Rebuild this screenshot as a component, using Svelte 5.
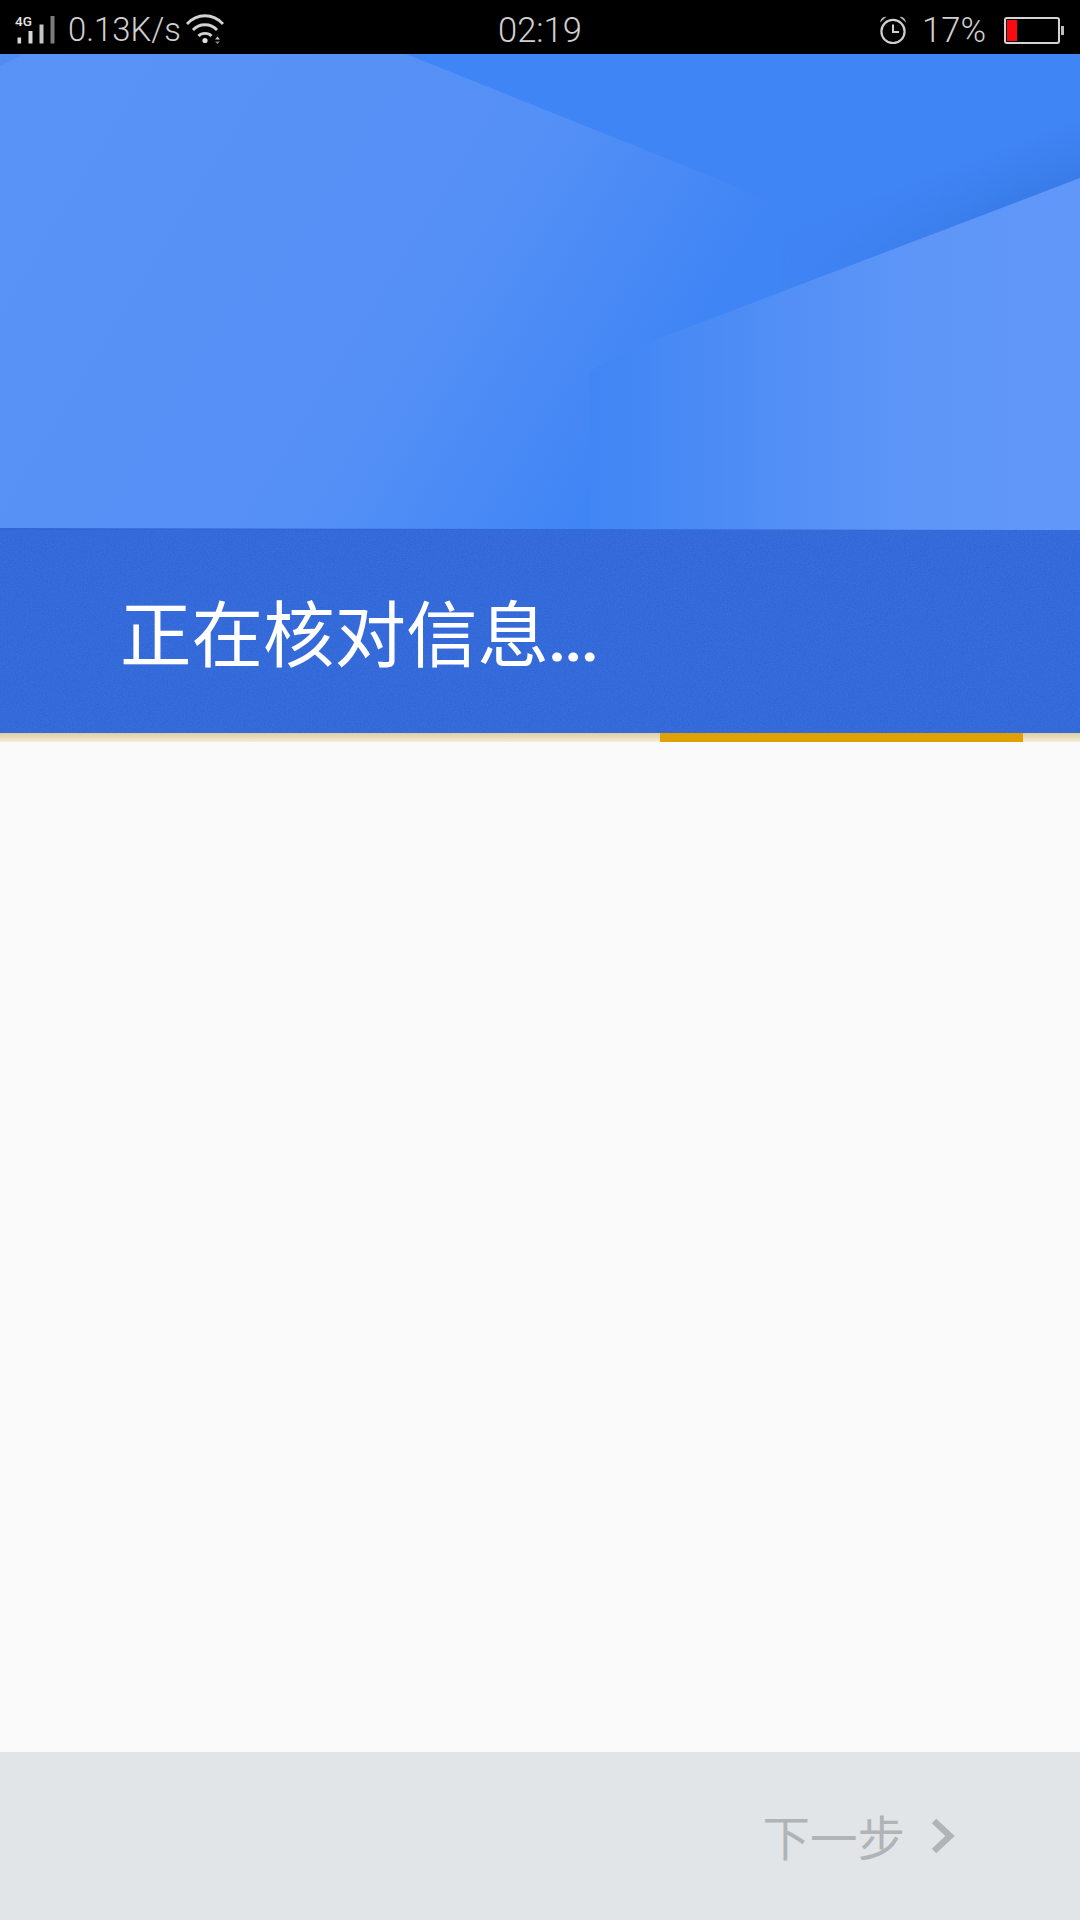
<script>
  const title = '正在核对信息';
</script>

<div class="screen">
  <header class="status">
    <div class="left">
      <svg class="signal" width="46" height="36" viewBox="0 -6 46 36">
        <text x="0" y="10" class="net">4G</text>
        <rect x="2.5" y="21.5" width="3.6" height="6" fill="#d6d6d6"/>
        <rect x="13.5" y="15" width="4" height="12.5" fill="#d6d6d6"/>
        <rect x="24.5" y="8.5" width="4" height="19" fill="#c4c4c4"/>
        <rect x="35.5" y="0" width="4" height="27.5" fill="#7c7c7c"/>
      </svg>
      <span class="speed">0.13K/s</span>
      <svg class="wifi" width="38" height="30" viewBox="0 0 38 30" fill="none" stroke="#d2d2d2" stroke-width="2.8">
        <path d="M1 10 C11 -1 27 -1 37 10"/>
        <path d="M7 16 C13 9 25 9 31 16"/>
        <path d="M12.5 22 C15.5 18.5 22.5 18.5 25.5 22"/>
        <circle cx="19" cy="26.5" r="2.6" fill="#e0e0e0" stroke="none"/>
        <path d="M29 25.5 L34 25.5 L31.5 22.5 Z" fill="#c8c8c8" stroke="none"/>
        <path d="M29 27.5 L34 27.5 L31.5 30 Z" fill="#8a8a8a" stroke="none"/>
      </svg>
    </div>
    <div class="time">02:19</div>
    <div class="right">
      <svg class="alarm" width="28" height="28" viewBox="0 0 28 28" fill="none" stroke="#cfcfcf">
        <circle cx="14" cy="15.5" r="11.6" stroke-width="2.2"/>
        <path d="M14 8.5 V16 H20" stroke-width="2"/>
        <path d="M1 6.5 C1.5 2.5 4 0.6 7.5 0.8 Z" fill="#b8b8b8" stroke="none"/>
        <path d="M27 6.5 C26.5 2.5 24 0.6 20.5 0.8 Z" fill="#b8b8b8" stroke="none"/>
      </svg>
      <span class="pct">17%</span>
      <div class="battery">
        <div class="charge"></div>
      </div>
      <div class="tip"></div>
    </div>
  </header>

  <section class="hero">
    <svg class="art" viewBox="0 0 1080 476" preserveAspectRatio="none">
      <defs>
        <linearGradient id="left" gradientUnits="userSpaceOnUse" x1="0" y1="0" x2="853" y2="521">
          <stop offset="0" stop-color="#5a93f7"/>
          <stop offset="0.5" stop-color="#5590f6"/>
          <stop offset="0.736" stop-color="#4085f5"/>
          <stop offset="1" stop-color="#4085f5"/>
        </linearGradient>
        <linearGradient id="fold" gradientUnits="userSpaceOnUse" x1="590" y1="300" x2="1080" y2="300">
          <stop offset="0" stop-color="#4186f5"/>
          <stop offset="0.12" stop-color="#4588f5"/>
          <stop offset="0.3" stop-color="#4e8cf5"/>
          <stop offset="0.65" stop-color="#5e96f8"/>
          <stop offset="1" stop-color="#6097f8"/>
        </linearGradient>
        <linearGradient id="shade" gradientUnits="userSpaceOnUse" x1="1060" y1="72" x2="1080" y2="124">
          <stop offset="0" stop-color="#3779e4" stop-opacity="0"/>
          <stop offset="1" stop-color="#3779e4" stop-opacity="0.75"/>
        </linearGradient>
        <linearGradient id="fadeX" gradientUnits="userSpaceOnUse" x1="780" y1="0" x2="1000" y2="0">
          <stop offset="0" stop-color="#000"/>
          <stop offset="1" stop-color="#fff"/>
        </linearGradient>
        <mask id="fadeMask" maskUnits="userSpaceOnUse" x="0" y="0" width="1080" height="476">
          <rect width="1080" height="476" fill="url(#fadeX)"/>
        </mask>
      </defs>
      <rect width="1080" height="476" fill="url(#left)"/>
      <path d="M406 0 H1080 V124 L699 269 L770 146 Z" fill="#4085f5"/>
      <path d="M1080 60 V124 L700 269 V60 Z" fill="url(#shade)" mask="url(#fadeMask)"/>
      <path d="M1080 124 V476 H590 V317 L634 294 Z" fill="url(#fold)"/>
      <path d="M0 0 H24 L0 12 Z" fill="#4f8cf4"/>
      <path d="M0 474 L1080 476 H0 Z" fill="#3067d8"/>
    </svg>
  </section>

  <section class="banner">
    <svg class="grain" aria-hidden="true">
      <filter id="noise"><feTurbulence type="fractalNoise" baseFrequency="0.7" numOctaves="2"/>
        <feColorMatrix values="0 0 0 0 1  0 0 0 0 1  0 0 0 0 1  0 0 0 0.35 -0.1"/></filter>
      <rect width="100%" height="100%" filter="url(#noise)" opacity="0.3"/>
    </svg>
    <h1>{title}<span class="dots">...</span></h1>
  </section>

  <div class="progress"><div class="fill"></div></div>

  <main class="body"></main>

  <footer class="foot">
    <span class="next">下一步</span>
    <svg class="chev" width="24" height="36" viewBox="0 0 24 36" fill="none" stroke="#b0b4b7" stroke-width="6.5">
      <path d="M3 3 L19 18 L3 33"/>
    </svg>
  </footer>
</div>

<style>
  :global(body) { margin: 0; background: #fafafa; }
  .screen {
    width: 1080px; height: 1920px; display: flex; flex-direction: column; overflow: hidden;
    font-family: Roboto, "Noto Sans CJK SC", sans-serif;
  }
  .status {
    height: 54px; flex: none; background: #000; color: #d0d0d0;
    display: grid; grid-template-columns: 1fr auto 1fr; align-items: center;
    font-weight: 300; font-size: 34px;
  }
  .left { display: flex; align-items: center; padding-left: 15px; }
  .signal { margin-top: -5px; }
  .net { font: 500 13.5px Roboto, sans-serif; fill: #e6e6e6; }
  .speed { margin-left: 7px; line-height: 54px; font-size: 32.8px; }
  .wifi { margin-left: 5px; margin-top: -2px; }
  .time { line-height: 60px; font-size: 34.5px; }
  .right { display: flex; align-items: center; justify-content: flex-end; padding-right: 16px; }
  .alarm { margin-top: -1px; }
  .pct { margin-left: 15px; line-height: 54px; font-size: 34.6px; }
  .battery {
    width: 50px; height: 21px; margin-left: 18px; border: 2px solid #d4d4d4; border-radius: 3px;
    padding: 1px; box-sizing: content-box; display: flex;
  }
  .charge { width: 10px; background: #fb0a10; }
  .tip { width: 3px; height: 9px; margin-left: 1px; background: #bdbdbd; }
  .hero { height: 476px; flex: none; background: #5590f6; position: relative; }
  .art { display: block; width: 100%; height: 100%; }
  .banner {
    height: 203px; flex: none; box-sizing: border-box; background: #3067d8; position: relative;
    padding: 55px 0 0 120px; overflow: hidden;
  }
  .grain { position: absolute; inset: 0; width: 100%; height: 100%; }
  h1 {
    margin: 0; position: relative; font-family: "Noto Sans CJK SC", sans-serif;
    font-weight: 400; font-size: 71.5px; line-height: 90px; color: #fff; white-space: nowrap;
  }
  .dots { font-family: Roboto, sans-serif; font-weight: 900; font-size: 54px; }
  .progress {
    height: 9px; flex: none; background: linear-gradient(#dccf9e, #ece3c8 70%, #f4efde);
    padding-left: 660px;
  }
  .fill { width: 363px; height: 100%; background: #e0a106; }
  .body { flex: 1; background: #fafafa; }
  .foot {
    height: 168px; flex: none; background: #e1e5e8; display: flex; align-items: center;
    justify-content: flex-end; padding-right: 125px; gap: 26px;
  }
  .next {
    font-family: "Noto Sans CJK SC", sans-serif; font-weight: 400; font-size: 47.5px; color: #b0b4b7;
    line-height: 1;
  }
</style>
